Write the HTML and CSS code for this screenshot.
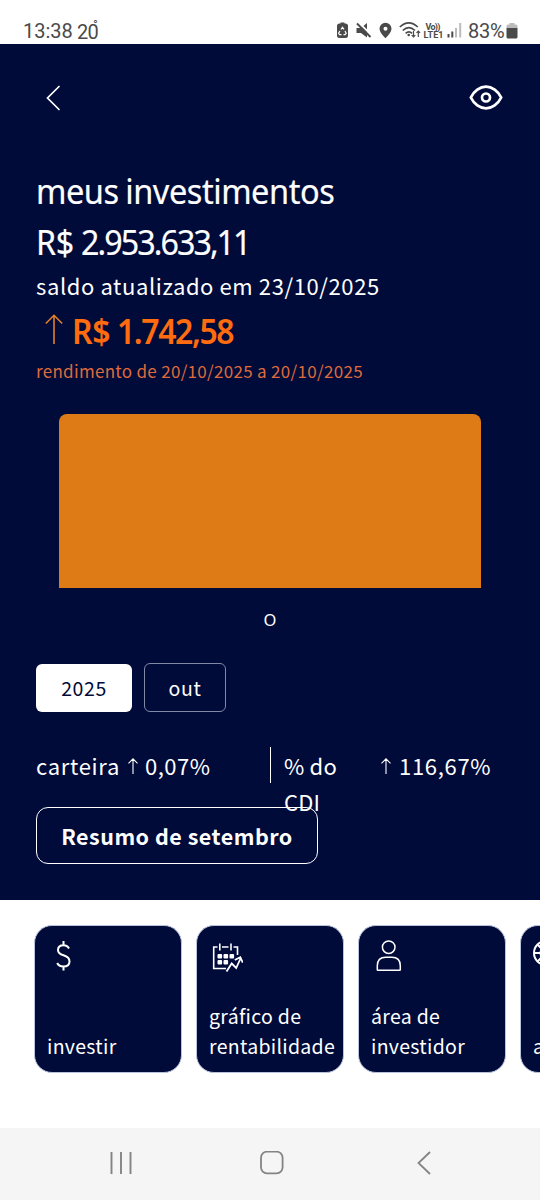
FILE: index.html
```html
<!DOCTYPE html>
<html lang="pt-BR">

<head>
    <meta charset="UTF-8">
    <meta name="viewport" content="width=device-width, initial-scale=1.0">
    <title>meus investimentos</title>
    <link rel="stylesheet" href="styles.css">
</head>

<body>
    <div class="status">
        <span class="clock">13:38</span>
        <span class="temp">20</span><span class="degree">°</span>
        <svg class="status-icons" width="138" height="24" viewBox="336 18 138 24">
            <!-- bateria reciclagem -->
            <path d="M338.500 23.500h1v-1h4v1h1q2.500 0 2.500 2.500v9.500q0 2.500-2.500 2.500h-6q-2.500 0-2.500-2.500V26q0-2.500 2.500-2.500z" fill="#4a4a4a" />
            <path d="M340 29.500l1.500-2.200 1.500 2.200M344 31l1.200 2.400-1.200 1.200h-1.500M340.500 34.600h-2l-.9-1.300 1.300-2.300" fill="none" stroke="#fff" stroke-width="1.200" />
            <!-- som desligado -->
            <path d="M355.500 28h4.500l6-5v14.500l-6-4.500h-4.500z" fill="#4a4a4a" />
            <path d="M358 23l14 13.500" stroke="#fff" stroke-width="1.800" />
            <path d="M356 23.500l13.500 13.500" stroke="#4a4a4a" stroke-width="2" />
            <!-- local -->
            <path d="M384.500 22.800a6 6 0 0 1 6 6c0 4-6 9.400-6 9.400s-6-5.400-6-9.400a6 6 0 0 1 6-6z" fill="#4a4a4a" />
            <circle cx="384.500" cy="28.700" r="2" fill="#fff" />
            <!-- wifi -->
            <g fill="none" stroke="#4a4a4a" stroke-width="1.600">
                <path d="M398.800 27q9-8.200 18 0" />
                <path d="M401.700 30.500q6.200-5.800 12.300 0" />
                <path d="M404.600 33.300q3.300-3 6.500 0" />
            </g>
            <circle cx="407.700" cy="35" r="1.300" fill="#4a4a4a" />
            <path d="M412.500 31v6M410.700 35.200l1.800 1.800 1.800-1.800M417.300 37v-6M415.500 32.800l1.800-1.800 1.800 1.800" fill="none" stroke="#4a4a4a" stroke-width="1.200" />
            <!-- volte -->
            <text x="424.500" y="29.600" class="volte" textLength="15">Vo))</text>
            <text x="422.500" y="38" class="volte" textLength="20">LTE1</text>
            <!-- sinal -->
            <path d="M447.500 34v3.500M451.300 31.500v6" stroke="#4a4a4a" stroke-width="2" />
            <path d="M455 28v9.500M459.200 23v14.500" stroke="#bbb" stroke-width="2" />
        </svg>
        <span class="percent">83%</span>
        <svg class="battery" width="12" height="16" viewBox="0 0 12 16">
            <path d="M.5 5V3q0-1.500 1.500-1.500h1.500V0h5v1.500H10q1.500 0 1.500 1.500v2z" fill="#bbb" />
            <path d="M.5 5h11v9q0 1.500-1.500 1.500H2Q.5 15.500.5 14z" fill="#4a4a4a" />
        </svg>
    </div>

    <main class="hero">
        <div class="topbar">
            <svg width="16" height="26" viewBox="0 0 16 26">
                <path d="M13 1.500L1.500 13 13 24.500" fill="none" stroke="#fff" stroke-width="1.700" stroke-linecap="round" />
            </svg>
            <svg width="34" height="26" viewBox="0 0 34 26">
                <path d="M1.800 12.500C5 6 11 1.700 17 1.700S29 6 32.200 12.500C29 19 23 23.300 17 23.300S5 19 1.800 12.500z" fill="none" stroke="#fff" stroke-width="2.800" stroke-linejoin="round" />
                <circle cx="17" cy="12.500" r="4" fill="none" stroke="#fff" stroke-width="2.700" />
            </svg>
        </div>

        <h1 class="title">meus investimentos</h1>
        <div class="amount"><span class="currency">R$</span> 2.953.633,11</div>
        <div class="updated">saldo atualizado em 23/10/2025</div>
        <div class="earning">
            <svg width="18" height="31" viewBox="0 0 18 31">
                <path d="M9 30V1.500M.8 9.500L9 1.300l8.200 8.200" fill="none" stroke="#e18127" stroke-width="1.600" />
            </svg>
            <span class="earning-value"><span class="currency">R$</span> 1.742,58</span>
        </div>
        <div class="period">rendimento de 20/10/2025 a 20/10/2025</div>

        <div class="chart">
            <div class="bar"></div>
            <div class="month">O</div>
        </div>

        <div class="chips">
            <div class="chip active">2025</div>
            <div class="chip">out</div>
        </div>

        <div class="stats">
            <div class="wallet">
                <span class="wallet-name">carteira</span>
                <svg class="arrow" width="10" height="16" viewBox="0 0 10 16">
                    <path d="M5 16V1M.5 5.300L5 .8l4.500 4.500" fill="none" stroke="#fff" stroke-width="1.100" />
                </svg>
                <span class="wallet-value">0,07%</span>
            </div>
            <div class="cdi">% do CDI</div>
            <div class="cdi-value">
                <svg class="arrow" width="10" height="16" viewBox="0 0 10 16">
                    <path d="M5 16V1M.5 5.300L5 .8l4.500 4.500" fill="none" stroke="#fff" stroke-width="1.100" />
                </svg>
                <span>116,67%</span>
            </div>
        </div>

        <div class="summary">Resumo de setembro</div>
    </main>

    <div class="cards">
        <div class="card">
            <svg width="32" height="32" viewBox="0 0 32 32">
                <path d="M22 8.500Q20.500 5.200 16.500 5.200 11 5.200 11 10q0 3.700 5.500 5.300 6 1.700 6 6.200 0 5-6 5-4.800 0-6.300-3.500M16.500 1v4.200M16.500 26.500v4" fill="none" stroke="#fff" stroke-width="2" />
            </svg>
            <span>investir</span>
        </div>
        <div class="card">
            <svg width="34" height="32" viewBox="0 0 34 32">
                <path d="M8.500 7H4.700v21.500H17M13 7h6.500M24.500 7h4v8M10.800 3.500v7M22 3.500v7" fill="none" stroke="#fff" stroke-width="1.600" />
                <g fill="#fff">
                    <rect x="8.500" y="14" width="4.600" height="4.500" rx="1" />
                    <rect x="14.500" y="14" width="4.600" height="4.500" rx="1" />
                    <rect x="20.500" y="14" width="4.600" height="4.500" rx="1" />
                    <rect x="8.500" y="20" width="4.600" height="4.500" rx="1" />
                    <rect x="14.500" y="20" width="4.600" height="4.500" rx="1" />
                </g>
                <path d="M17.500 31.500l5.200-8 4.500 4.500L32 17.500M25.800 20l5.500-2.800 2.500 5.500" fill="none" stroke="#fff" stroke-width="1.800" />
            </svg>
            <span>gráfico de<br>rentabilidade</span>
        </div>
        <div class="card">
            <svg width="32" height="32" viewBox="0 0 32 32">
                <circle cx="17.700" cy="7.200" r="6.300" fill="none" stroke="#fff" stroke-width="1.500" />
                <path d="M6.300 29.700v-4q0-8.500 8.500-8.500h6q8.500 0 8.500 8.500v4q0 .6-.6.600H6.900q-.6 0-.6-.6z" fill="none" stroke="#fff" stroke-width="1.500" />
            </svg>
            <span>área de<br>investidor</span>
        </div>
        <div class="card">
            <svg width="32" height="32" viewBox="0 0 32 32">
                <g fill="none" stroke="#fff" stroke-width="2">
                    <circle cx="13" cy="13" r="12" />
                    <circle cx="13" cy="13" r="5.500" />
                    <path d="M1 13h6.500M19 13h6M13 1v6.500M13 19v6M4.500 4.500l4.600 4.600M17 17l4.600 4.600M21.500 4.500L17 9M9 17l-4.600 4.600" />
                </g>
            </svg>
            <span>a</span>
        </div>
    </div>

    <nav class="navbar">
        <svg width="24" height="24" viewBox="0 0 24 24">
            <path d="M2.500 1v22M12 1v22M21.500 1v22" stroke="#848484" stroke-width="1.900" />
        </svg>
        <svg class="home" width="24" height="24" viewBox="0 0 24 24">
            <rect x="1" y=".7" width="21.600" height="21.600" rx="6" fill="none" stroke="#848484" stroke-width="1.800" />
        </svg>
        <svg width="14" height="24" viewBox="0 0 14 24">
            <path d="M13 1L1.500 12 13 23" fill="none" stroke="#848484" stroke-width="1.800" />
        </svg>
    </nav>
</body>

</html>
```
FILE: styles.css
```css
* {
    box-sizing: border-box;
}

body {
    margin: 0;
    width: 540px;
    height: 1200px;
    overflow: hidden;
    display: flex;
    flex-direction: column;
    background: #fff;
    color: #fff;
    font-family: "Noto Sans CJK SC", "Noto Sans", sans-serif;
}

svg {
    display: block;
    flex: none;
}

/* barra de status */
.status {
    height: 44px;
    flex: none;
    display: flex;
    align-items: flex-start;
    padding: 18px 22px 0 23px;
    font-family: Roboto, sans-serif;
    font-size: 20px;
    line-height: 26px;
    color: #4a4a4a;
}

.clock {
    width: 54px;
}

.temp {
    padding-top: 1px;
    letter-spacing: -0.8px;
}

.degree {
    margin: -6px 0 0 -5px;
    font-size: 13px;
}

.status-icons {
    margin-left: auto;
}

.volte {
    font-family: Roboto, sans-serif;
    font-size: 9px;
    font-weight: 700;
    fill: #4a4a4a;
}

.percent {
    margin-left: -7px;
    width: 38px;
    letter-spacing: -0.3px;
}

.battery {
    margin-top: 5px;
}

/* saldo */
.hero {
    height: 856px;
    flex: none;
    padding: 40px 36px 0;
    background: #000b3a;
}

.topbar {
    display: flex;
    justify-content: space-between;
    height: 81px;
    padding: 1px 1px 0 10px;
}

.title,
.amount {
    margin: 0;
    font-family: "Noto Sans", sans-serif;
    font-size: 35px;
    line-height: 51px;
    font-weight: 400;
    white-space: nowrap;
    letter-spacing: -0.5px;
    word-spacing: -1.500px;
    transform: scaleX(0.93);
    transform-origin: left;
    -webkit-text-stroke: 0.2px;
}

.amount {
    letter-spacing: -2.100px;
    word-spacing: 1px;
    transform: scaleX(0.92);
}

.currency {
    letter-spacing: -0.4px;
}

.updated {
    font-size: 22px;
    line-height: 36px;
    height: 38px;
    white-space: nowrap;
    letter-spacing: 0.6px;
}

.earning {
    display: flex;
    align-items: flex-start;
    padding-left: 9px;
    color: #ff6b0f;
    font-family: "Noto Sans", sans-serif;
    font-size: 34px;
    line-height: 53px;
    height: 50px;
    font-weight: 600;
    letter-spacing: -1.500px;
}

.earning svg {
    margin: 9px 9px 0 0;
}

.earning-value {
    transform: scaleX(0.94);
    transform-origin: left;
}

.period {
    color: #df6a3c;
    font-size: 17px;
    line-height: 32px;
    white-space: nowrap;
    letter-spacing: 0.3px;
}

.chart {
    margin: 27px 23px 0;
}

.bar {
    height: 174px;
    border-radius: 8px 8px 0 0;
    background: #df7b16;
}

.month {
    margin-top: 17px;
    text-align: center;
    font-family: "Noto Sans", sans-serif;
    font-size: 16.500px;
    line-height: 30px;
}

.chips {
    display: flex;
    gap: 12px;
    margin-top: 28px;
}

.chip {
    width: 82px;
    height: 49px;
    border: 1px solid #8289a6;
    border-radius: 6px;
    text-align: center;
    font-size: 19.500px;
    line-height: 48px;
    letter-spacing: 0.6px;
}

.chip.active {
    width: 96px;
    height: 48px;
    margin-top: 1px;
    border: none;
    background: #fff;
    color: #000b3a;
    line-height: 47px;
}

.stats {
    display: flex;
    height: 36px;
    margin-top: 35px;
    font-size: 22px;
    line-height: 36px;
    letter-spacing: 0.7px;
}

.wallet {
    display: flex;
    width: 235px;
    border-right: 1.500px solid #fff;
}

.wallet-name {
    width: 92px;
}

.arrow {
    margin-top: 11px;
}

.wallet-value {
    margin-left: 7px;
    letter-spacing: 0.5px;
}

.cdi {
    width: 70px;
    margin-left: 13px;
    letter-spacing: 0.2px;
}

.cdi-value {
    display: flex;
    gap: 8px;
    margin-left: 27px;
}

.summary {
    width: 282px;
    height: 57px;
    margin-top: 24px;
    border: 1.500px solid #fff;
    border-radius: 12px;
    text-align: center;
    font-size: 21.500px;
    font-weight: 700;
    line-height: 56px;
    white-space: nowrap;
    letter-spacing: 0.5px;
}

/* atalhos */
.cards {
    display: flex;
    gap: 14px;
    height: 228px;
    flex: none;
    padding: 25px 0 0 34px;
    overflow: hidden;
}

.card {
    width: 148px;
    height: 148px;
    flex: none;
    display: flex;
    flex-direction: column;
    justify-content: space-between;
    padding: 14px 0 11px 12px;
    border: 1px solid #b9c3dd;
    border-radius: 18px;
    background: #000b3a;
    font-size: 19.500px;
    line-height: 30px;
    white-space: nowrap;
    letter-spacing: 0.3px;
}

/* navegação */
.navbar {
    display: flex;
    flex: 1;
    justify-content: space-between;
    padding: 23px 109px 0;
    background: #f5f5f5;
}

.home {
    margin-right: 6px;
}
```
